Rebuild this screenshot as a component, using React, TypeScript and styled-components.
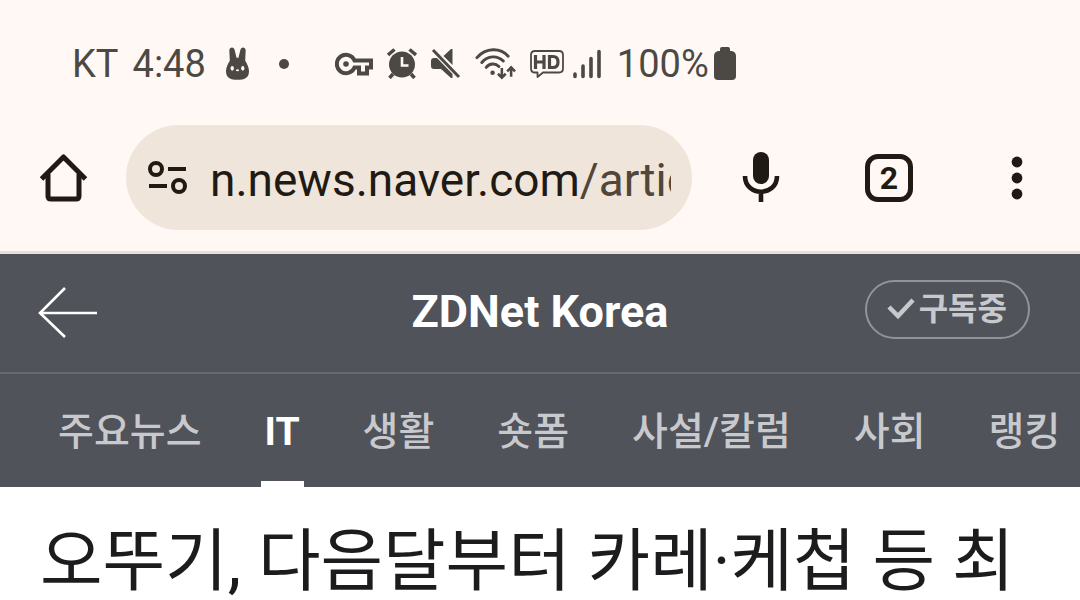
import React from 'react';
import styled, { createGlobalStyle } from 'styled-components';

const GlobalStyle = createGlobalStyle`
  * { box-sizing: border-box; }
  body {
    margin: 0;
    background: #ffffff;
    font-family: Roboto, 'Noto Sans CJK KR', sans-serif;
    overflow-x: hidden;
  }
  button, input { font-family: inherit; }
`;

const Chrome = styled.div`
  background: #fff8f5;
  border-bottom: 3px solid #ebe0d6;
`;

const StatusBar = styled.div`
  display: flex;
  align-items: center;
  height: 125px;
  padding: 2px 0 0 72px;
  color: #4c4945;
  font-size: 38px;
  line-height: 48px;
  svg { display: block; flex: none; }
`;

const StatusText = styled.span<{ $gap?: number }>`
  margin-right: ${({ $gap = 0 }) => $gap}px;
`;

const StatusIcons = styled.div`
  display: flex;
  align-items: center;
  gap: 14px;
  margin: 0 16px 0 46px;
`;

const Reception = styled.div`
  display: flex;
  align-items: center;
  gap: 9px;
`;

const Dot = styled.span`
  width: 10px;
  height: 10px;
  margin-left: 30px;
  border-radius: 50%;
  background: currentColor;
`;

const Toolbar = styled.div`
  display: flex;
  align-items: center;
  padding: 0 35px 21px 36px;
  color: #1f1a14;
`;

const IconButton = styled.button`
  display: flex;
  align-items: center;
  justify-content: center;
  flex: none;
  width: 56px;
  height: 80px;
  padding: 0;
  border: 0;
  background: none;
  color: inherit;
`;

const AddressBar = styled.div`
  display: flex;
  align-items: center;
  flex: 1;
  min-width: 0;
  height: 105px;
  margin: 0 41px 0 34px;
  padding: 0 21px 0 20px;
  border-radius: 53px;
  background: #f0e5da;
  svg { flex: none; }
`;

const Address = styled.a`
  flex: 1;
  min-width: 0;
  margin-left: 20px;
  padding-top: 4px;
  overflow: hidden;
  white-space: nowrap;
  text-decoration: none;
  color: #1f1a14;
  font-size: 46px;
  line-height: 60px;
`;

const Path = styled.span`
  color: #50463a;
`;

const Actions = styled.div`
  display: flex;
  gap: 72px;
`;

const TabCount = styled.span`
  display: flex;
  align-items: center;
  justify-content: center;
  width: 48px;
  height: 48px;
  border: 5px solid currentColor;
  border-radius: 13px;
  font-size: 32px;
  font-weight: 700;
  line-height: 32px;
`;

const PressHeader = styled.header`
  background: #50535a;
  color: #ffffff;
`;

const TitleBar = styled.div`
  display: grid;
  grid-template-columns: 1fr auto 1fr;
  align-items: center;
  height: 120px;
  padding: 0 38px 2px;
  border-bottom: 2px solid #65686f;
`;

const BackButton = styled(IconButton)`
  justify-self: start;
  width: 60px;
`;

const PressName = styled.h1`
  margin: 0;
  font-size: 45px;
  font-weight: 700;
  line-height: 56px;
`;

const Subscribe = styled.button`
  display: flex;
  align-items: center;
  justify-self: end;
  gap: 4px;
  height: 59px;
  margin: 0 12px 6px 0;
  padding: 0 21px 0 20px;
  border: 2px solid #92949a;
  border-radius: 30px;
  background: none;
  color: #c8c9cd;
  font-size: 32px;
  font-weight: 700;
  line-height: 40px;
`;

const Tabs = styled.nav`
  display: flex;
  gap: 55px;
  height: 113px;
  padding-left: 54px;
  overflow: hidden;
`;

const Tab = styled.a<{ $active?: boolean }>`
  flex: none;
  padding: 0 4px;
  border-bottom: 6px solid ${({ $active }) => ($active ? '#ffffff' : 'transparent')};
  color: ${({ $active }) => ($active ? '#ffffff' : '#c8c9cd')};
  font-size: 39px;
  font-weight: ${({ $active }) => ($active ? 700 : 500)};
  line-height: 116px;
  text-decoration: none;
`;

const Headline = styled.h2`
  margin: 0;
  padding: 33px 40px 0;
  overflow: hidden;
  white-space: nowrap;
  color: #1c1c1e;
  font-size: 68px;
  font-weight: 400;
  line-height: 84px;
`;

const Bunny = () => (
  <svg width="23" height="33" viewBox="0 0 24 34" aria-hidden="true">
    <path fill="currentColor" d="M3.500 4C3 -0.500 8.500 -1 9 3L11 11H13L15 3C15.500 -1 21 -0.500 20.500 4L20 14C22 17 24 21 24 25C24 32 19 34 12 34S0 32 0 25C0 21 2 17 4 14Z" />
    <g fill="#fff8f5"><ellipse cx="6.5" cy="22" rx="1.7" ry="2.500" /><ellipse cx="17.5" cy="22" rx="1.7" ry="2.500" /><ellipse cx="12" cy="24" rx="1.6" ry="1.1" /></g>
  </svg>
);

const KeyIcon = () => (
  <svg width="38" height="24" viewBox="0 0 38 24" fill="none" stroke="currentColor" strokeWidth="4" aria-hidden="true">
    <path d="M19.5 8.5A9.2 9.2 0 1 0 19.5 15.5H24V21.5H32V15.5H36V8.5Z" />
    <circle cx="11" cy="12" r="2.8" fill="currentColor" stroke="none" />
  </svg>
);

const AlarmIcon = () => (
  <svg width="30" height="31" viewBox="0 0 30 31" fill="none" stroke="currentColor" strokeWidth="3.5" aria-hidden="true">
    <circle cx="15" cy="16.5" r="13" fill="currentColor" stroke="none" />
    <path d="M1 7L7.500 1.500M29 7L22.500 1.500M6 26L2.500 30M24 26L27.500 30" />
    <path stroke="#fff8f5" strokeWidth="2.600" d="M15 9V17.500H21.500" />
  </svg>
);

const MuteIcon = () => (
  <svg width="30" height="31" viewBox="0 0 30 31" fill="none" aria-hidden="true">
    <path fill="currentColor" d="M0 13Q0 10 3 10H6L21.500 26V30H20L10 21H3Q0 21 0 18ZM12.500 8L20 1H21.500V17Z" />
    <path stroke="currentColor" strokeWidth="3" d="M2 2L28 29" />
  </svg>
);

const WifiIcon = () => (
  <svg width="41" height="32" viewBox="0 0 42 32" fill="none" stroke="currentColor" strokeWidth="3" strokeLinecap="round" aria-hidden="true">
    <path d="M2 9.500C11 -1 26 -1 34 8M7 14.500C13 7 23 7 29 13M11.500 19.500C15 15 21 15 24.500 18.500" />
    <circle cx="18" cy="25" r="2.300" fill="currentColor" stroke="none" />
    <path strokeWidth="2.600" strokeLinecap="butt" d="M27.500 20V30M23.500 26L27.500 30L31.500 26M37 29V19.500M33 23.500L37 19.500L41 23.500" />
  </svg>
);

const HdIcon = () => (
  <svg width="34" height="28" viewBox="0 0 34 28" fill="none" stroke="currentColor" aria-hidden="true">
    <path strokeWidth="1.800" strokeLinejoin="round" d="M5 1H29Q33 1 33 5V18.500Q33 22.500 29 22.500H13L7.500 27V22.500H5Q1 22.500 1 18.500V5Q1 1 5 1Z" />
    <path strokeWidth="3.200" d="M5.500 5V19M14 5V19M5.500 12H14M19.500 6.500H23Q28 6.500 28 12T23 17.500H19.500Z" />
  </svg>
);

const SignalIcon = () => (
  <svg width="28" height="30" viewBox="0 0 28 30" stroke="currentColor" strokeWidth="3.600" strokeLinecap="round" aria-hidden="true">
    <path d="M2 25V27.500M10 17V27.500M18 9.500V27.500M26 2.500V27.500" />
  </svg>
);

const BatteryIcon = () => (
  <svg width="22" height="33" viewBox="0 0 22 33" fill="currentColor" aria-hidden="true">
    <path d="M6 4V2Q6 0 8 0H14Q16 0 16 2V4H18Q22 5 22 9V29Q22 33 18 33H4Q0 33 0 29V9Q0 5 4 4Z" />
  </svg>
);

const HomeIcon = () => (
  <svg width="48" height="48" viewBox="0 0 48 48" fill="none" stroke="currentColor" strokeWidth="5" aria-hidden="true">
    <path strokeLinejoin="round" d="M8 20V42Q8 45 11 45H36Q39 45 39 42V20" />
    <path strokeLinejoin="round" d="M1.500 25L23.500 3L45.500 25" />
  </svg>
);

const SiteInfoIcon = () => (
  <svg width="44" height="40" viewBox="0 0 44 40" fill="none" stroke="currentColor" strokeWidth="4" aria-hidden="true">
    <circle cx="10" cy="11" r="6" /><circle cx="33" cy="28" r="6" />
    <path d="M22 11H40M3 28H21" />
  </svg>
);

const MicIcon = () => (
  <svg width="38" height="52" viewBox="0 0 38 52" fill="none" stroke="currentColor" aria-hidden="true">
    <rect x="11" y="0" width="16" height="32" rx="8" fill="currentColor" stroke="none" />
    <path strokeWidth="4.600" d="M3 24C3 45 35 45 35 24M19 39V50" />
  </svg>
);

const MoreIcon = () => (
  <svg width="12" height="44" viewBox="0 0 12 44" fill="currentColor" aria-hidden="true">
    <circle cx="6" cy="6" r="5.400" /><circle cx="6" cy="22" r="5.400" /><circle cx="6" cy="38" r="5.400" />
  </svg>
);

const ArrowIcon = () => (
  <svg width="60" height="52" viewBox="0 0 60 52" fill="none" stroke="currentColor" strokeWidth="2.600" aria-hidden="true">
    <path d="M27 2L2 27L27 51M2 27H59" />
  </svg>
);

const CheckIcon = () => (
  <svg width="28" height="22" viewBox="0 0 28 22" fill="none" stroke="currentColor" strokeWidth="4.500" aria-hidden="true">
    <path d="M2 9L11 18L26 2" />
  </svg>
);

const tabs = ['주요뉴스', 'IT', '생활', '숏폼', '사설/칼럼', '사회', '랭킹'];

export default function App() {
  return (
    <>
      <GlobalStyle />
      <Chrome>
        <StatusBar>
          <StatusText $gap={14}>KT</StatusText>
          <StatusText $gap={20}>4:48</StatusText>
          <Bunny />
          <Dot />
          <StatusIcons>
            <KeyIcon />
            <AlarmIcon />
            <MuteIcon />
            <WifiIcon />
            <Reception>
              <HdIcon />
              <SignalIcon />
            </Reception>
          </StatusIcons>
          <StatusText $gap={5}>100%</StatusText>
          <BatteryIcon />
        </StatusBar>
        <Toolbar>
          <IconButton aria-label="Home"><HomeIcon /></IconButton>
          <AddressBar>
            <SiteInfoIcon />
            <Address href="#">n.news.naver.com<Path>/article</Path></Address>
          </AddressBar>
          <Actions>
            <IconButton aria-label="Voice search"><MicIcon /></IconButton>
            <IconButton aria-label="Open tabs"><TabCount>2</TabCount></IconButton>
            <IconButton aria-label="More options"><MoreIcon /></IconButton>
          </Actions>
        </Toolbar>
      </Chrome>
      <PressHeader>
        <TitleBar>
          <BackButton aria-label="Back"><ArrowIcon /></BackButton>
          <PressName>ZDNet Korea</PressName>
          <Subscribe><CheckIcon />구독중</Subscribe>
        </TitleBar>
        <Tabs>
          {tabs.map((tab) => (
            <Tab key={tab} href="#" $active={tab === 'IT'}>{tab}</Tab>
          ))}
        </Tabs>
      </PressHeader>
      <main>
        <Headline>오뚜기, 다음달부터 카레·케첩 등 최</Headline>
      </main>
    </>
  );
}
